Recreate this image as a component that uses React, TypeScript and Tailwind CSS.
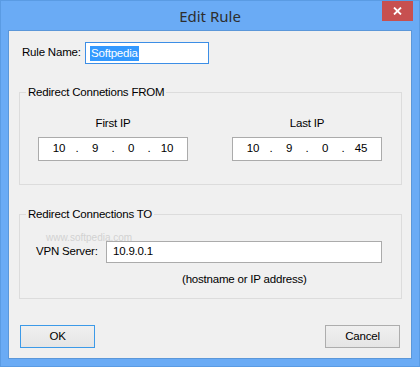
import React from 'react';

const IpBox: React.FC<{ label: string; parts: string[] }> = ({ label, parts }) => (
  <div className="flex flex-col items-center w-[150px]">
    <div className="h-[14px] leading-[14px]">{label}</div>
    <div className="mt-[7px] h-[24px] w-[150px] bg-white border border-[#ababab] flex items-center pl-[11px]">
      {parts.map((p, i) => (
        <React.Fragment key={i}>
          {i > 0 && <span className="w-[18px] text-center">.</span>}
          <span className="w-[18px] text-center">{p}</span>
        </React.Fragment>
      ))}
    </div>
  </div>
);

export default function App() {
  return (
    <div className="w-[420px] h-[367px] bg-[#6aabf5] border border-[#5a9be3] flex flex-col font-['Liberation_Sans',Arial,sans-serif] text-[11.5px] tracking-[-0.2px] text-black relative overflow-hidden whitespace-nowrap">
      {/* title bar */}
      <div className="h-[29px] flex items-center justify-center relative">
        <span className="text-[15px] tracking-normal text-[#2e2e2e] font-['Noto_Sans',sans-serif] mt-[1px]">Edit Rule</span>
        <div className="absolute right-[6px] top-0 w-[31px] h-[20px] bg-[#c75050] flex items-center justify-center">
          <svg width="9" height="8" viewBox="0 0 9 8">
            <path d="M1 0.5 L8 7.5 M8 0.5 L1 7.5" stroke="white" strokeWidth="1.8" />
          </svg>
        </div>
      </div>

      {/* client area */}
      <div className="mx-[7px] mb-[7px] flex-1 bg-[#f0f0f0] border border-[#5b97d9] flex flex-col">
        <div className="flex items-center mt-[11px] pl-[13px]">
          <span className="w-[63px] shrink-0">Rule Name:</span>
          <div className="w-[124px] h-[22px] bg-white border border-[#3c8ee6] flex items-center pl-[4px]">
            <span className="bg-[#3399ff] text-white px-[1px] leading-[15px]">Softpedia</span>
          </div>
        </div>

        <fieldset className="ml-[10px] w-[383px] mt-[21px] border border-[#dcdcdc] pb-[23px]">
          <legend className="ml-[6px] px-[2px] leading-[14px]">Redirect Connetions FROM</legend>
          <div className="flex mt-[17px] ml-[18px] gap-[44px]">
            <IpBox label="First IP" parts={['10', '9', '0', '10']} />
            <IpBox label="Last IP" parts={['10', '9', '0', '45']} />
          </div>
        </fieldset>

        <fieldset className="ml-[10px] w-[383px] mt-[22px] border border-[#dcdcdc] pb-[12px]">
          <legend className="ml-[6px] px-[2px] leading-[14px]">Redirect Connections TO</legend>
          <div className="flex items-center mt-[20px] pl-[16px]">
            <span className="w-[70px] shrink-0">VPN Server:</span>
            <div className="w-[276px] h-[22px] bg-white border border-[#ababab] flex items-center pl-[6px]">10.9.0.1</div>
          </div>
          <div className="mt-[9px] pl-[162px] leading-[14px]">(hostname or IP address)</div>
        </fieldset>

        <div className="flex justify-between mt-[26px] px-[11px]">
          <button className="w-[73px] h-[21px] border border-[#3c9ae8] bg-gradient-to-b from-[#f0f0f0] to-[#e5e5e5] leading-[19px] box-content">OK</button>
          <button className="w-[73px] h-[21px] border border-[#adadad] bg-gradient-to-b from-[#f0f0f0] to-[#e5e5e5] leading-[19px] box-content">Cancel</button>
        </div>
      </div>

      {/* watermark */}
      <div className="absolute left-[45px] top-[229px] text-[10px] tracking-normal text-[#d2d2d2] pointer-events-none">www.softpedia.com</div>
    </div>
  );
}
